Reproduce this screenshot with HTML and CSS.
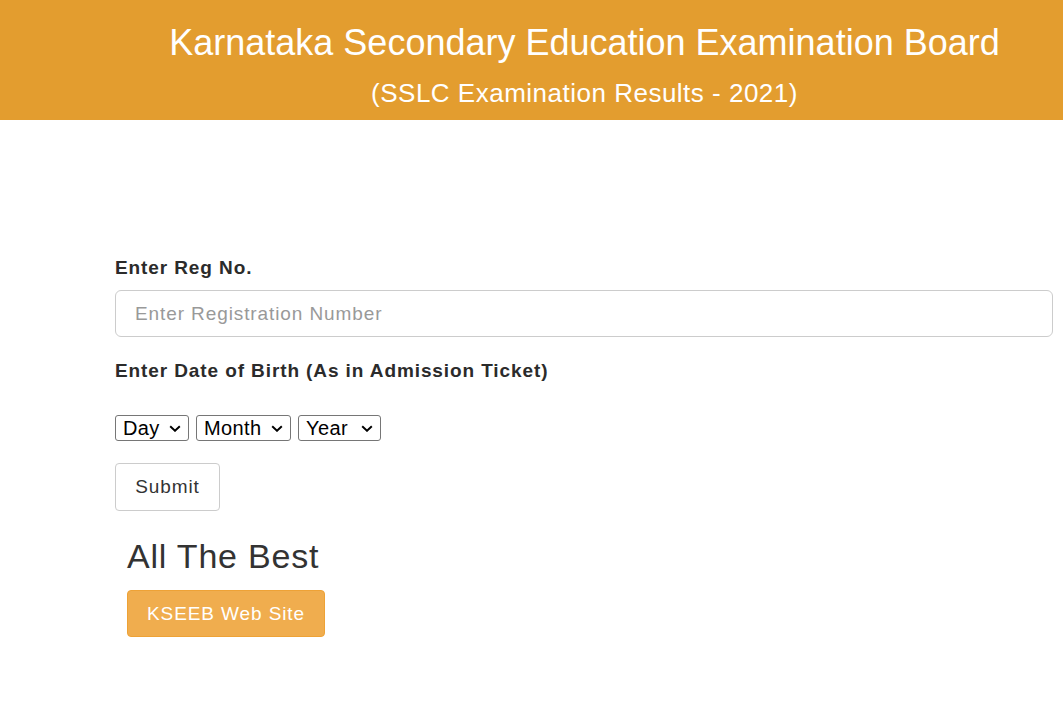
FILE: index.html
```html
<!DOCTYPE html>
<html lang="en">
<head>
    <meta charset="UTF-8">
    <title>SSLC Results 2021</title>
    <meta name="viewport" content="width=device-width, initial-scale=1.0">
    <link rel="stylesheet" href="styles.css">
</head>
<body>

<div class="header">
    <h1>Karnataka Secondary Education Examination Board</h1>
    <h2>(SSLC Examination Results - 2021)</h2>
</div>

<div class="main">
    <form id="resultForm">
        <label for="regno">Enter Reg No.</label>
        <input type="text" id="regno" name="regno" placeholder="Enter Registration Number">

        <label>Enter Date of Birth (As in Admission Ticket)</label>
        <div class="dob-row">
            <select class="sel-day" name="day">
                <option>Day</option>
            </select>
            <select class="sel-month" name="month">
                <option>Month</option>
            </select>
            <select class="sel-year" name="year">
                <option>Year</option>
            </select>
        </div>

        <button type="submit" class="btn-submit">Submit</button>
    </form>

    <div class="best">
        <h3>All The Best</h3>
        <a href="#" class="btn-site">KSEEB Web Site</a>
    </div>
</div>

</body>
</html>
```

FILE: styles.css
```css
body {
    font-family: 'Liberation Sans', Arial, Helvetica, sans-serif;
    background: #fff;
    color: #333;
    margin: 0;
    padding: 0;
}

.header {
    background: #e39d2f;
    height: 120px;
    box-sizing: border-box;
    padding: 23px 0 0 106px;
    text-align: center;
    color: #fff;
}

.header h1 {
    font-size: 36px;
    font-weight: normal;
    line-height: 40px;
    margin: 0;
}

.header h2 {
    font-size: 26px;
    font-weight: normal;
    line-height: 30px;
    letter-spacing: 0.5px;
    margin: 15px 0 0;
}

.main {
    padding: 136px 10px 0 115px;
}

label {
    display: block;
    font-weight: bold;
    font-size: 19px;
    line-height: 24px;
    letter-spacing: 0.9px;
    margin-bottom: 10px;
    color: #2b2b2b;
}

input[type="text"] {
    display: block;
    width: 100%;
    height: 47px;
    padding: 10px 19px;
    border: 1px solid #ccc;
    border-radius: 6px;
    font-family: inherit;
    font-size: 19px;
    letter-spacing: 0.9px;
    color: #555;
    box-sizing: border-box;
    margin-bottom: 22px;
}

input[type="text"]::placeholder {
    color: #999;
}

.dob-row {
    display: flex;
    gap: 7px;
    margin-top: 32px;
}

select {
    appearance: none;
    -webkit-appearance: none;
    height: 26px;
    border: 1px solid #767676;
    border-radius: 3px;
    background: #fff url("data:image/svg+xml;utf8,<svg xmlns='http://www.w3.org/2000/svg' width='12' height='7' viewBox='0 0 12 7'><path d='M1.2 1.2 L6 5.8 L10.8 1.2' fill='none' stroke='black' stroke-width='1.9'/></svg>") no-repeat right 7px center;
    font-family: inherit;
    font-size: 20px;
    letter-spacing: 0.4px;
    color: #000;
    padding: 0 0 0 7px;
    box-sizing: border-box;
}

.sel-day { width: 74px; }
.sel-month { width: 95px; }
.sel-year { width: 83px; }

.btn-submit {
    display: block;
    margin-top: 22px;
    width: 105px;
    height: 48px;
    background: #fff;
    border: 1px solid #ccc;
    border-radius: 4px;
    font-family: inherit;
    font-size: 19px;
    letter-spacing: 0.9px;
    color: #333;
    cursor: pointer;
}

.best {
    padding-left: 12px;
    margin-top: 25px;
}

.best h3 {
    font-size: 34px;
    font-weight: normal;
    line-height: 40px;
    letter-spacing: 0.8px;
    margin: 0 0 14px;
    color: #333;
}

.btn-site {
    display: inline-block;
    background: #f0ad4e;
    border: 1px solid #eea236;
    border-radius: 4px;
    color: #fff;
    font-size: 19px;
    letter-spacing: 0.9px;
    line-height: 25px;
    padding: 10px 19px;
    text-decoration: none;
}
```
